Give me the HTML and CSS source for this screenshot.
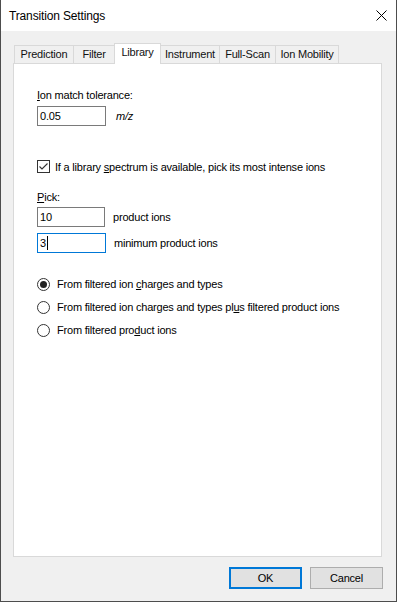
FILE: index.html
```html
<!DOCTYPE html>
<html lang="en">
<head>
    <meta charset="UTF-8">
    <title>Transition Settings</title>
    <link rel="stylesheet" href="styles.css">
</head>
<body>
    <div class="window">
        <div class="titlebar">
            <span class="title">Transition Settings</span>
            <svg class="close-icon" width="11" height="11" viewBox="0 0 11 11">
                <path d="M0.5 0.5 L10.5 10.5 M10.5 0.5 L0.5 10.5" stroke="#000" stroke-width="1" fill="none"/>
            </svg>
        </div>
        <div class="client">
            <div class="tabs">
                <div class="tab tab-prediction">Prediction</div>
                <div class="tab tab-filter">Filter</div>
                <div class="tab tab-library selected">Library</div>
                <div class="tab tab-instrument">Instrument</div>
                <div class="tab tab-fullscan">Full-Scan</div>
                <div class="tab tab-mobility">Ion Mobility</div>
            </div>
            <div class="panel">
                <div class="label"><u>I</u>on match tolerance:</div>
                <div class="field-row">
                    <div class="textbox">0.05</div>
                    <span class="unit">m/z</span>
                </div>

                <div class="check-row">
                    <span class="checkbox">
                        <svg width="11" height="11" viewBox="0 0 11 11">
                            <path d="M1.5 5.5 L4 8 L9.5 2.5" stroke="#333" stroke-width="1.1" fill="none"/>
                        </svg>
                    </span>
                    <span>If a library <u>s</u>pectrum is available, pick its most intense ions</span>
                </div>

                <div class="label label-pick"><u>P</u>ick:</div>
                <div class="field-row field-pick">
                    <div class="textbox">10</div>
                    <span class="field-text">product ions</span>
                </div>
                <div class="field-row field-min">
                    <div class="textbox focused">3<span class="caret"></span></div>
                    <span class="field-text">minimum product ions</span>
                </div>

                <div class="radio-group">
                    <div class="radio-row">
                        <span class="radio checked"></span>
                        <span>From filtered ion <u>c</u>harges and types</span>
                    </div>
                    <div class="radio-row">
                        <span class="radio"></span>
                        <span>From filtered ion charges and types pl<u>u</u>s filtered product ions</span>
                    </div>
                    <div class="radio-row">
                        <span class="radio"></span>
                        <span>From filtered pro<u>d</u>uct ions</span>
                    </div>
                </div>
            </div>
            <div class="buttons">
                <button class="btn btn-ok">OK</button>
                <button class="btn">Cancel</button>
            </div>
        </div>
    </div>
</body>
</html>
```

FILE: styles.css
```css
body {
    margin: 0;
    font-family: 'Liberation Sans', Arial, sans-serif;
    font-size: 11px;
    letter-spacing: -0.2px;
    color: #000;
    background: #fff;
}
.window {
    width: 397px;
    height: 602px;
    box-sizing: border-box;
    border: 1px solid #4d4d4d;
    border-top: none;
    display: flex;
    flex-direction: column;
}
.titlebar {
    height: 31px;
    background: #fff;
    display: flex;
    align-items: center;
    justify-content: space-between;
    padding: 0 9px 0 8px;
}
.title {
    font-size: 12px;
    letter-spacing: -0.15px;
}
.close-icon {
    display: block;
}
.client {
    flex: 1;
    background: #f0f0f0;
    padding: 12px 13px 12px 12px;
    display: flex;
    flex-direction: column;
}

/* tabs */
.tabs {
    display: flex;
    align-items: flex-end;
    height: 20px;
    padding-left: 1px;
}
.tab {
    box-sizing: border-box;
    height: 18px;
    border: 1px solid #d9d9d9;
    border-bottom: none;
    margin-left: -1px;
    background: #f0f0f0;
    text-align: center;
    line-height: 17px;
    color: #111;
}
.tab:first-child {
    margin-left: 0;
}
.tab.selected {
    height: 21px;
    background: #fff;
    margin-bottom: -1px;
    line-height: 17px;
    position: relative;
    z-index: 1;
}
.tab-prediction { width: 60px; }
.tab-filter { width: 42px; }
.tab-library { width: 47px; }
.tab-instrument { width: 60px; }
.tab-fullscan { width: 57px; }
.tab-mobility { width: 64px; }

/* panel */
.panel {
    flex: 1;
    background: #fff;
    border: 1px solid #d9d9d9;
    margin-right: 1px;
    padding: 24px 0 0 23px;
}
.label {
    line-height: 15px;
}
.field-row {
    display: flex;
    align-items: center;
    margin-top: 3px;
}
.textbox {
    box-sizing: border-box;
    width: 69px;
    height: 20px;
    border: 1px solid #7a7a7a;
    padding: 0 2px;
    line-height: 18px;
    display: flex;
    align-items: center;
}
.textbox.focused {
    border-color: #0078d7;
}
.caret {
    display: inline-block;
    width: 1px;
    height: 14px;
    background: #000;
    margin-left: 1px;
}
.unit {
    font-style: italic;
    margin-left: 10px;
}
.field-text {
    margin-left: 8px;
}
.check-row {
    display: flex;
    align-items: center;
    margin-top: 33px;
    height: 15px;
}
.checkbox {
    box-sizing: border-box;
    width: 13px;
    height: 13px;
    border: 1px solid #333;
    margin-right: 5px;
    display: flex;
    align-items: center;
    justify-content: center;
}
.checkbox svg {
    display: block;
}
.label-pick {
    margin-top: 16px;
}
.field-pick {
    margin-top: 2px;
}
.field-pick .textbox {
    width: 68px;
}
.field-min {
    margin-top: 6px;
}
.radio-group {
    margin-top: 23px;
    display: flex;
    flex-direction: column;
    gap: 7px;
}
.radio-row {
    display: flex;
    align-items: center;
    height: 16px;
}
.radio {
    box-sizing: border-box;
    width: 13px;
    height: 13px;
    border: 1px solid #333;
    border-radius: 50%;
    margin-right: 7px;
    display: flex;
    align-items: center;
    justify-content: center;
}
.radio.checked::after {
    content: '';
    width: 7px;
    height: 7px;
    border-radius: 50%;
    background: #222;
}

/* buttons */
.buttons {
    display: flex;
    justify-content: flex-end;
    gap: 8px;
    margin-top: 10px;
}
.btn {
    box-sizing: border-box;
    width: 73px;
    height: 22px;
    background: #e1e1e1;
    border: 1px solid #adadad;
    font-family: inherit;
    font-size: 11px;
    letter-spacing: -0.2px;
    color: #000;
    padding: 0;
}
.btn-ok {
    border: 2px solid #0078d7;
}
```
